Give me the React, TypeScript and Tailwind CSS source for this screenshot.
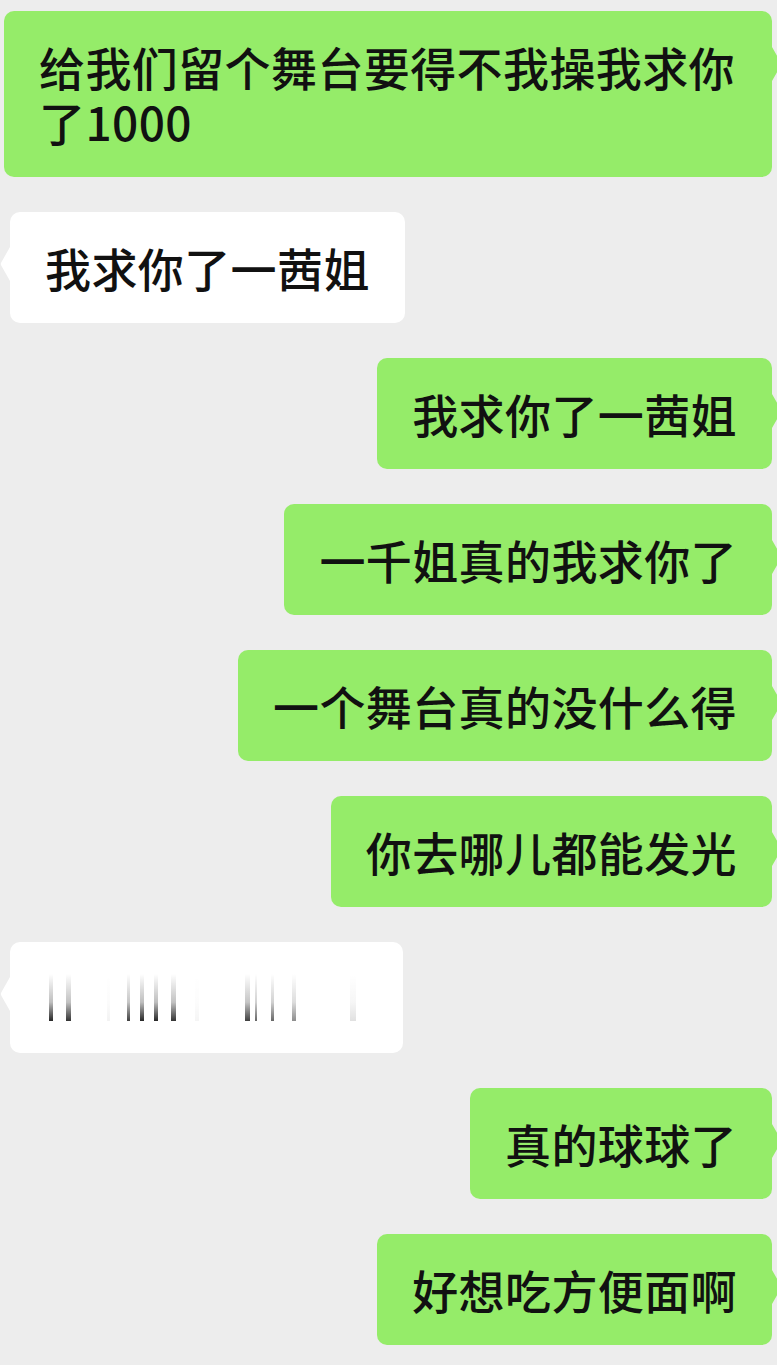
import React from 'react';

type Msg = { side: 'left' | 'right'; text?: string; blurred?: boolean };

const messages: Msg[] = [
  { side: 'right', text: '给我们留个舞台要得不我操我求你了1000' },
  { side: 'left', text: '我求你了一茜姐' },
  { side: 'right', text: '我求你了一茜姐' },
  { side: 'right', text: '一千姐真的我求你了' },
  { side: 'right', text: '一个舞台真的没什么得' },
  { side: 'right', text: '你去哪儿都能发光' },
  { side: 'left', blurred: true },
  { side: 'right', text: '真的球球了' },
  { side: 'right', text: '好想吃方便面啊' },
];

// blurred strip: [x, width, darkness]
const bars: [number, number, number][] = [
  [4, 4, 0.85],
  [21, 5, 0.8],
  [62, 3, 0.05],
  [82, 3, 0.75],
  [95, 4, 0.85],
  [109, 4, 0.85],
  [126, 5, 0.8],
  [150, 4, 0.04],
  [200, 5, 0.75],
  [210, 2, 0.6],
  [226, 3, 0.6],
  [247, 4, 0.45],
  [305, 6, 0.12],
];

const Blurred = () => (
  <svg width="323" height="55" viewBox="0 0 323 55" className="block">
    <defs>
      {bars.map(([, , a], i) => (
        <linearGradient key={i} id={`bar${i}`} x1="0" y1="0" x2="0" y2="1">
          <stop offset="0" stopColor="#000" stopOpacity="0" />
          <stop offset="0.6" stopColor="#000" stopOpacity={a * 0.3} />
          <stop offset="1" stopColor="#000" stopOpacity={a} />
        </linearGradient>
      ))}
    </defs>
    {bars.map(([x, w], i) => (
      <rect key={i} x={x} y="4" width={w} height="47" fill={`url(#bar${i})`} />
    ))}
  </svg>
);

const Bubble = ({ msg }: { msg: Msg }) => {
  const right = msg.side === 'right';
  return (
    <div className={right ? 'flex justify-end pr-[5px]' : 'flex justify-start pl-[10px]'}>
      <div
        className={
          'relative max-w-[768px] rounded-[10px] px-[35px] py-[28px] text-[46px] leading-[55px] tracking-[0.4px] font-medium text-[#111111] ' +
          (right ? 'bg-[#95ec69]' : 'bg-white')
        }
      >
        {msg.blurred ? <Blurred /> : msg.text}
        {right ? (
          <svg width="10" height="34" viewBox="0 0 10 34" className="absolute -right-[10px] top-[36px]">
            <path d="M0 0 L8.5 15 Q10 17 8.5 19 L0 34 Z" fill="#95ec69" />
          </svg>
        ) : (
          <svg width="10" height="34" viewBox="0 0 10 34" className="absolute -left-[10px] top-[35px]">
            <path d="M10 0 L1.5 15 Q0 17 1.5 19 L10 34 Z" fill="#ffffff" />
          </svg>
        )}
      </div>
    </div>
  );
};

const App = () => {
  return (
    <div
      className="min-h-[1365px] w-full overflow-hidden bg-[#ededed] pt-[11px]"
      style={{ fontFamily: '"Noto Sans CJK SC", "Noto Sans", sans-serif' }}
    >
      <div className="flex flex-col gap-[35px]">
        {messages.map((m, i) => (
          <Bubble key={i} msg={m} />
        ))}
      </div>
    </div>
  );
};

export default App;
